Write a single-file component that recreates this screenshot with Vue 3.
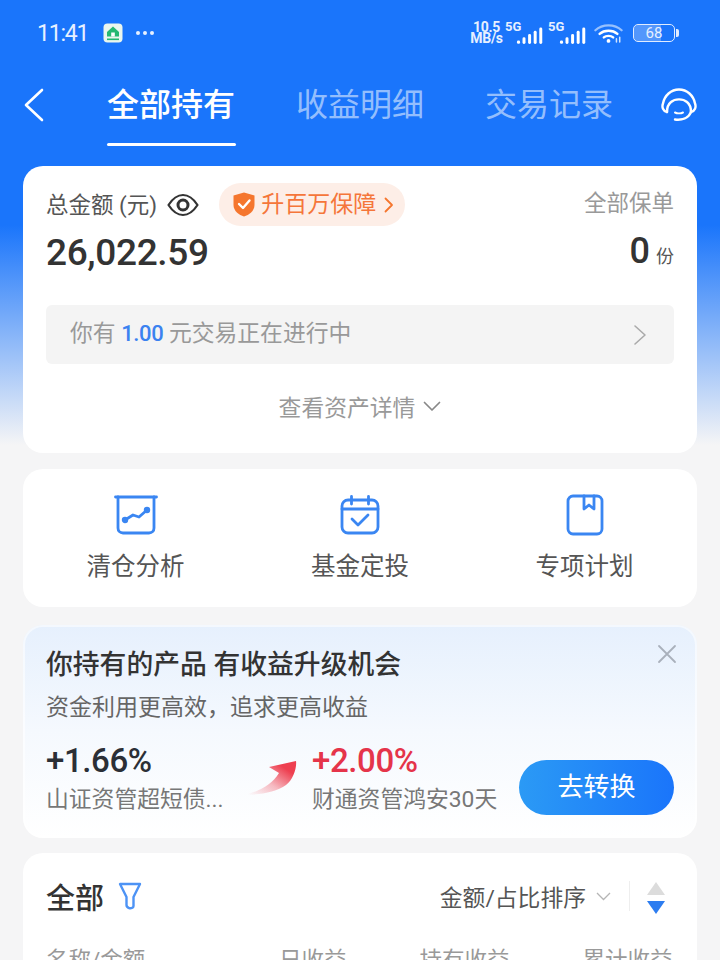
<template>
  <div class="page">
    <div class="status-bar">
      <div class="status-left">
        <span class="time">11:41</span>
        <svg class="app-icon" width="20" height="20" viewBox="0 0 20 20">
          <rect x="0.5" y="0.5" width="19" height="19" rx="4" fill="#eaf6ee" />
          <path d="M10 3.5 L16 9 V13.5 H4 V9 Z" fill="#25b872" />
          <rect x="8.2" y="9.5" width="3.6" height="4" fill="#fff" />
          <rect x="4" y="15.5" width="12" height="1.6" fill="#25b872" />
        </svg>
        <span class="dots"><i></i><i></i><i></i></span>
      </div>
      <div class="status-right">
        <div class="speed">10.5<br />MB/s</div>
        <div v-for="n in 2" :key="n" class="signal">
          <span class="five-g">5G</span>
          <svg width="27" height="19" viewBox="0 0 29 19">
            <rect x="1" y="15" width="3.4" height="3.4" rx="1.5" fill="#fff" />
            <rect x="7" y="11.5" width="3.2" height="7" rx="1.5" fill="#fff" />
            <rect x="13" y="8" width="3.2" height="10.5" rx="1.5" fill="#fff" />
            <rect x="19" y="4.5" width="3.2" height="14" rx="1.5" fill="#fff" />
            <rect x="25" y="1" width="3.2" height="17.5" rx="1.5" fill="#fff" />
          </svg>
        </div>
        <svg class="wifi" width="29" height="21" viewBox="0 0 31 22" fill="none" stroke="#fff" stroke-linecap="round">
          <path d="M1.5 7.5 C9 0.5 22 0.5 29.5 7.5" stroke-width="2.4" stroke-opacity="0.55" />
          <path d="M6 11.5 C11 7 20 7 25 11.5" stroke-width="2.6" />
          <path d="M10.5 15.2 C13 13 18 13 20.5 15.2" stroke-width="2.6" />
          <circle cx="15.5" cy="19" r="2" fill="#fff" stroke="none" />
          <path d="M24 20 V16.5 M27.5 20 V15" stroke-width="1.6" stroke-opacity="0.8" />
        </svg>
        <div class="battery">
          <div class="battery-body"><span class="battery-fill"></span><span class="battery-num">68</span></div>
          <span class="battery-tip"></span>
        </div>
      </div>
    </div>

    <div class="nav">
      <svg class="back" width="22" height="34" viewBox="0 0 22 34" fill="none" stroke="#fff" stroke-width="2.6" stroke-linecap="round" stroke-linejoin="round">
        <path d="M19 2 L3 17 L19 32" />
      </svg>
      <div class="tabs">
        <div v-for="(tab, i) in tabs" :key="tab" :class="['tab', { active: i === 0 }]">{{ tab }}</div>
      </div>
      <svg class="service" width="36" height="34" viewBox="0 0 36 34" fill="none" stroke="#fff" stroke-width="2.4" stroke-linecap="round" stroke-linejoin="round">
        <path d="M6 24 C2 23 0.6 19 2 15.5 C3.5 7.5 10 1.5 18 1.5 C26 1.5 32.5 7.5 34 15.5 C35.4 19 34 23 30 24" />
        <path d="M6 24 C6 20 7 16.5 10 14 C14 10.5 22 10.5 26 14 C29 16.5 30 20 30 24" />
        <path d="M14 31.5 C21 32.5 27.5 30 30 24" />
        <path d="M14 24.5 C16 25.5 20 25.5 22 24.5" stroke-width="2" />
      </svg>
    </div>

    <div class="content">
      <section class="card asset-card">
        <div class="asset-top">
          <div class="asset-main">
            <div class="total-row">
              <span class="total-label">总金额 (元)</span>
              <svg class="eye" width="32" height="24" viewBox="0 0 32 24" fill="none" stroke="#333" stroke-width="2.2">
                <path d="M1.5 12 C7 3.5 12 2 16 2 C20 2 25 3.5 30.5 12 C25 20.5 20 22 16 22 C12 22 7 20.5 1.5 12 Z" stroke-linejoin="round" />
                <circle cx="16" cy="12" r="5" stroke-width="3" />
              </svg>
              <div class="upgrade">
                <svg width="22" height="25" viewBox="0 0 22 25">
                  <path d="M11 0.5 L21.5 3.5 V13 C21.5 19 16 23 11 24.5 C6 23 0.5 19 0.5 13 V3.5 Z" fill="#f5762e" />
                  <path d="M6 12 L10 16 L16.5 8.5" fill="none" stroke="#fff" stroke-width="2.4" stroke-linecap="round" stroke-linejoin="round" />
                </svg>
                <span>升百万保障</span>
                <svg width="10" height="16" viewBox="0 0 10 16" fill="none" stroke="#f5762e" stroke-width="1.8" stroke-linecap="round" stroke-linejoin="round">
                  <path d="M1.5 1.5 L8 8 L1.5 14.5" />
                </svg>
              </div>
            </div>
            <div class="total-value">26,022.59</div>
          </div>
          <div class="policy">
            <div class="policy-label">全部保单</div>
            <div class="policy-value"><b>0</b><span>份</span></div>
          </div>
        </div>
        <div class="trade-bar">
          <span class="trade-text">你有 <b>1.00</b> 元交易正在进行中</span>
          <svg width="14" height="22" viewBox="0 0 14 22" fill="none" stroke="#aaa" stroke-width="1.6" stroke-linecap="round" stroke-linejoin="round">
            <path d="M2 2 L12 11 L2 20" />
          </svg>
        </div>
        <div class="detail-link">
          <span>查看资产详情</span>
          <svg width="18" height="11" viewBox="0 0 18 11" fill="none" stroke="#888" stroke-width="1.7" stroke-linecap="round" stroke-linejoin="round">
            <path d="M1.5 1.5 L9 9 L16.5 1.5" />
          </svg>
        </div>
      </section>

      <section class="card actions">
        <div class="action">
          <svg width="44" height="40" viewBox="0 0 44 40" fill="none" stroke="#3a86f2" stroke-width="2.8" stroke-linecap="round" stroke-linejoin="round">
            <path d="M1.5 2 H42.5" />
            <path d="M4 2 V33 C4 36 6 38 9 38 H35 C38 38 40 36 40 33 V2" />
            <path d="M11 25 L19 20 L25 22 L33 15" />
            <circle cx="11" cy="25" r="1.8" fill="#3a86f2" />
            <circle cx="33" cy="15" r="1.8" fill="#3a86f2" />
          </svg>
          <span>清仓分析</span>
        </div>
        <div class="action">
          <svg width="40" height="40" viewBox="0 0 40 40" fill="none" stroke="#3a86f2" stroke-width="2.8" stroke-linecap="round" stroke-linejoin="round">
            <rect x="2" y="5" width="36" height="33" rx="6" />
            <path d="M2 14 H38 M11.5 1.5 V9 M28.5 1.5 V9" />
            <path d="M12 24 L18 30 L28 20" />
          </svg>
          <span>基金定投</span>
        </div>
        <div class="action">
          <svg width="38" height="42" viewBox="0 0 38 42" fill="none" stroke="#3a86f2" stroke-width="2.8" stroke-linecap="round" stroke-linejoin="round">
            <rect x="2" y="2" width="34" height="38" rx="5" />
            <path d="M18 2 V15 L23 11 L28 15 V2" />
          </svg>
          <span>专项计划</span>
        </div>
      </section>

      <section class="card promo">
        <svg class="promo-close" width="20" height="20" viewBox="0 0 20 20" stroke="#a9b0bb" stroke-width="1.8" stroke-linecap="round">
          <path d="M2 2 L18 18 M18 2 L2 18" />
        </svg>
        <h3 class="promo-title">你持有的产品 有收益升级机会</h3>
        <p class="promo-sub">资金利用更高效，追求更高收益</p>
        <div class="promo-row">
          <div class="fund from">
            <div class="rate">+1.66%</div>
            <div class="fund-name">山证资管超短债...</div>
          </div>
          <svg class="arrow" width="58" height="38" viewBox="0 0 58 38">
            <defs>
              <linearGradient id="arrowFill" x1="0" y1="1" x2="0.95" y2="0.1">
                <stop offset="0.05" stop-color="#ee3f50" stop-opacity="0" />
                <stop offset="0.45" stop-color="#ee3f50" stop-opacity="0.35" />
                <stop offset="0.85" stop-color="#ee3f50" />
              </linearGradient>
            </defs>
            <path d="M2 37 C16 34 30 27 37 15 L27 9 L54 3 C55 10 51 22 44 27 C34 34 18 37 2 37 Z" fill="url(#arrowFill)" />
          </svg>
          <div class="fund to">
            <div class="rate red">+2.00%</div>
            <div class="fund-name">财通资管鸿安30天</div>
          </div>
          <div class="convert">去转换</div>
        </div>
      </section>

      <section class="card holdings">
        <div class="holdings-head">
          <div class="holdings-title">
            <span>全部</span>
            <svg width="24" height="28" viewBox="0 0 24 28" fill="none" stroke="#4d93f5" stroke-width="2.4" stroke-linejoin="round">
              <path d="M2 2 H22 L15.5 15 V24 C15.5 26 13 26.5 11 26 C9.5 25.5 8.5 24.5 8.5 23 V15 Z" />
            </svg>
          </div>
          <div class="sort">
            <span>金额/占比排序</span>
            <svg width="15" height="9" viewBox="0 0 15 9" fill="none" stroke="#b5b5b5" stroke-width="1.3">
              <path d="M1 1 L7.5 7.5 L14 1" />
            </svg>
            <i class="divider"></i>
            <svg class="sort-arrows" width="18" height="32" viewBox="0 0 18 32">
              <path d="M9 0 L18 13 H0 Z" fill="#dcdcdc" />
              <path d="M0 19 H18 L9 32 Z" fill="#2d7df0" />
            </svg>
          </div>
        </div>
        <div class="col-heads">
          <span class="col-name">名称/金额</span>
          <span class="col">日收益</span>
          <span class="col">持有收益</span>
          <span class="col">累计收益</span>
        </div>
      </section>
    </div>
  </div>
</template>

<script setup>
const tabs = ['全部持有', '收益明细', '交易记录']
</script>

<style>
html, body {
  margin: 0;
  height: 960px;
  overflow: hidden;
  background: #f5f5f5;
}
</style>

<style scoped>
.page {
  width: 720px;
  height: 960px;
  overflow: hidden;
  background: linear-gradient(180deg, #1a75fb 0, #1a75fb 225px, #f5f5f6 445px);
  font-family: Roboto, "Noto Sans CJK SC", sans-serif;
  color: #333;
}

.status-bar {
  height: 66px;
  box-sizing: border-box;
  padding: 0 41px 0 37px;
  display: flex;
  justify-content: space-between;
  align-items: center;
  color: #e6f0ff;
}

.status-left {
  display: flex;
  align-items: center;
}

.time {
  font-size: 23px;
  letter-spacing: -1.2px;
}

.app-icon {
  margin-left: 15px;
}

.dots {
  display: flex;
  gap: 3px;
  margin-left: 13px;
}

.dots i {
  width: 4px;
  height: 4px;
  border-radius: 50%;
  background: #e6f0ff;
}

.status-right {
  display: flex;
  align-items: center;
}

.speed {
  width: 33px;
  margin-right: -3px;
  font-size: 14px;
  font-weight: 700;
  line-height: 11px;
  letter-spacing: -0.3px;
  text-align: center;
}

.signal {
  position: relative;
  width: 43px;
  height: 24px;
  display: flex;
  justify-content: flex-end;
  align-items: flex-end;
}

.five-g {
  position: absolute;
  left: 5px;
  top: -2px;
  font-size: 13px;
  font-weight: 700;
}

.wifi {
  margin-left: 8px;
}

.battery {
  display: flex;
  align-items: center;
  margin-left: 10px;
}

.battery-body {
  position: relative;
  width: 40px;
  height: 16px;
  border: 1.5px solid #e0ecff;
  border-radius: 5px;
  overflow: hidden;
  display: flex;
  align-items: center;
  justify-content: center;
}

.battery-fill {
  position: absolute;
  left: 0;
  top: 0;
  bottom: 0;
  width: 68%;
  background: rgba(255, 255, 255, 0.25);
}

.battery-num {
  position: relative;
  font-size: 15px;
}

.battery-tip {
  width: 3px;
  height: 8px;
  margin-left: 1px;
  border-radius: 0 2px 2px 0;
  background: #e0ecff;
}

.nav {
  position: relative;
  height: 100px;
  display: flex;
  align-items: flex-start;
}

.back {
  margin: 22px 0 0 23px;
}

.tabs {
  display: flex;
  gap: 60px;
  margin-left: 62px;
}

.tab {
  position: relative;
  width: 129px;
  height: 80px;
  line-height: 78px;
  font-size: 32px;
  white-space: nowrap;
  color: rgba(255, 255, 255, 0.55);
}

.tab.active {
  color: #fff;
  font-weight: 500;
}

.tab.active::after {
  content: '';
  position: absolute;
  left: 0;
  right: 0;
  bottom: 0;
  height: 3px;
  border-radius: 2px;
  background: #fff;
}

.service {
  position: absolute;
  right: 23px;
  top: 22px;
}

.content {
  padding: 0 23px;
  display: flex;
  flex-direction: column;
}

.card {
  background: #fff;
  border-radius: 20px;
}

.asset-card {
  height: 287px;
  box-sizing: border-box;
  padding: 17px 23px 0;
}

.asset-top {
  height: 93px;
  display: flex;
  justify-content: space-between;
}

.total-row {
  display: flex;
  align-items: center;
  height: 43px;
}

.total-label {
  margin-bottom: 4px;
  font-size: 22.5px;
  color: #555;
}

.eye {
  margin-left: 10px;
}

.upgrade {
  display: flex;
  align-items: center;
  height: 43px;
  box-sizing: border-box;
  margin-left: 20px;
  padding: 0 11px 0 14px;
  border-radius: 22px;
  background: #fdeee7;
  color: #f5763a;
  font-size: 23px;
}

.upgrade span {
  margin: 0 8px 5px 6px;
}

.total-value {
  margin-top: 4px;
  font-size: 37px;
  line-height: 46px;
  font-weight: 500;
  letter-spacing: -0.35px;
  color: #333;
}

.policy {
  text-align: right;
}

.policy-label {
  height: 43px;
  line-height: 40px;
  font-size: 22.5px;
  color: #999;
}

.policy-value {
  height: 46px;
  margin-top: 4px;
  line-height: 42px;
}

.policy-value b {
  font-size: 36px;
  font-weight: 500;
}

.policy-value span {
  margin-left: 6px;
  font-size: 18px;
  color: #555;
}

.trade-bar {
  margin-top: 29px;
  height: 59px;
  box-sizing: border-box;
  padding: 0 27px 0 24px;
  display: flex;
  align-items: center;
  justify-content: space-between;
  background: #f4f4f4;
  border-radius: 6px;
  font-size: 22.8px;
  color: #999;
}

.trade-text {
  margin-bottom: 7px;
}

.trade-bar b {
  font-size: 22px;
  letter-spacing: -0.4px;
  color: #3b82f0;
  font-weight: 500;
}

.detail-link {
  margin-top: 26px;
  display: flex;
  justify-content: center;
  align-items: center;
  gap: 8px;
  font-size: 22.8px;
  color: #999;
}

.actions {
  margin-top: 16px;
  height: 138px;
  box-sizing: border-box;
  padding-top: 25px;
  display: grid;
  grid-template-columns: 225px 224px 225px;
}

.action {
  display: flex;
  flex-direction: column;
  align-items: center;
  font-size: 24.5px;
  color: #555;
}

.action svg {
  height: 42px;
}

.action span {
  margin-top: 11px;
}

.promo {
  position: relative;
  margin-top: 18px;
  height: 213px;
  box-sizing: border-box;
  padding: 23px 23px 0;
  background: linear-gradient(180deg, #e6f0fd 0, #f5f9fe 50%, #fff 100%);
  box-shadow: inset 0 0 0 2px rgba(255, 255, 255, 0.55);
}

.promo-close {
  position: absolute;
  right: 20px;
  top: 19px;
}

.promo-title {
  margin: 0;
  font-size: 26.8px;
  line-height: 34px;
  font-weight: 500;
  color: #333;
}

.promo-sub {
  margin: 11px 0 0;
  font-size: 23px;
  line-height: 30px;
  color: #666;
}

.promo-row {
  position: relative;
  display: flex;
  align-items: flex-start;
  margin-top: 18px;
}

.fund.from {
  width: 196px;
}

.arrow {
  flex: none;
  margin: 17px 12px 0 0;
}

.rate {
  font-size: 33px;
  line-height: 40px;
  font-weight: 500;
  letter-spacing: -0.4px;
  color: #2b2f36;
}

.rate.red {
  color: #e5344a;
}

.fund-name {
  margin-top: 5px;
  font-size: 22.8px;
  line-height: 28px;
  color: #777;
  white-space: nowrap;
}

.convert {
  position: absolute;
  right: 0;
  top: 19px;
  width: 155px;
  height: 55px;
  line-height: 55px;
  text-align: center;
  border-radius: 28px;
  background: linear-gradient(90deg, #2b9af5, #1a75fb);
  color: #fff;
  font-size: 26px;
}

.holdings {
  margin-top: 15px;
  height: 160px;
  box-sizing: border-box;
  padding: 22px 23px 0;
}

.holdings-head {
  display: flex;
  justify-content: space-between;
  align-items: center;
  margin-right: 9px;
}

.holdings-title {
  display: flex;
  align-items: center;
  gap: 14px;
  font-size: 29px;
  font-weight: 500;
}

.sort {
  display: flex;
  align-items: center;
  font-size: 22.8px;
  color: #555;
}

.sort > svg:first-of-type {
  margin-left: 10px;
}

.sort-arrows {
  margin-top: 4px;
}

.divider {
  width: 1px;
  height: 30px;
  margin: 0 17px 0 18px;
  background: #eee;
}

.col-heads {
  display: flex;
  margin-top: 25px;
  font-size: 22.5px;
  color: #999;
}

.col-name {
  width: 233px;
}

.col {
  margin-right: 73px;
}

.col:last-child {
  margin-right: 0;
}
</style>
